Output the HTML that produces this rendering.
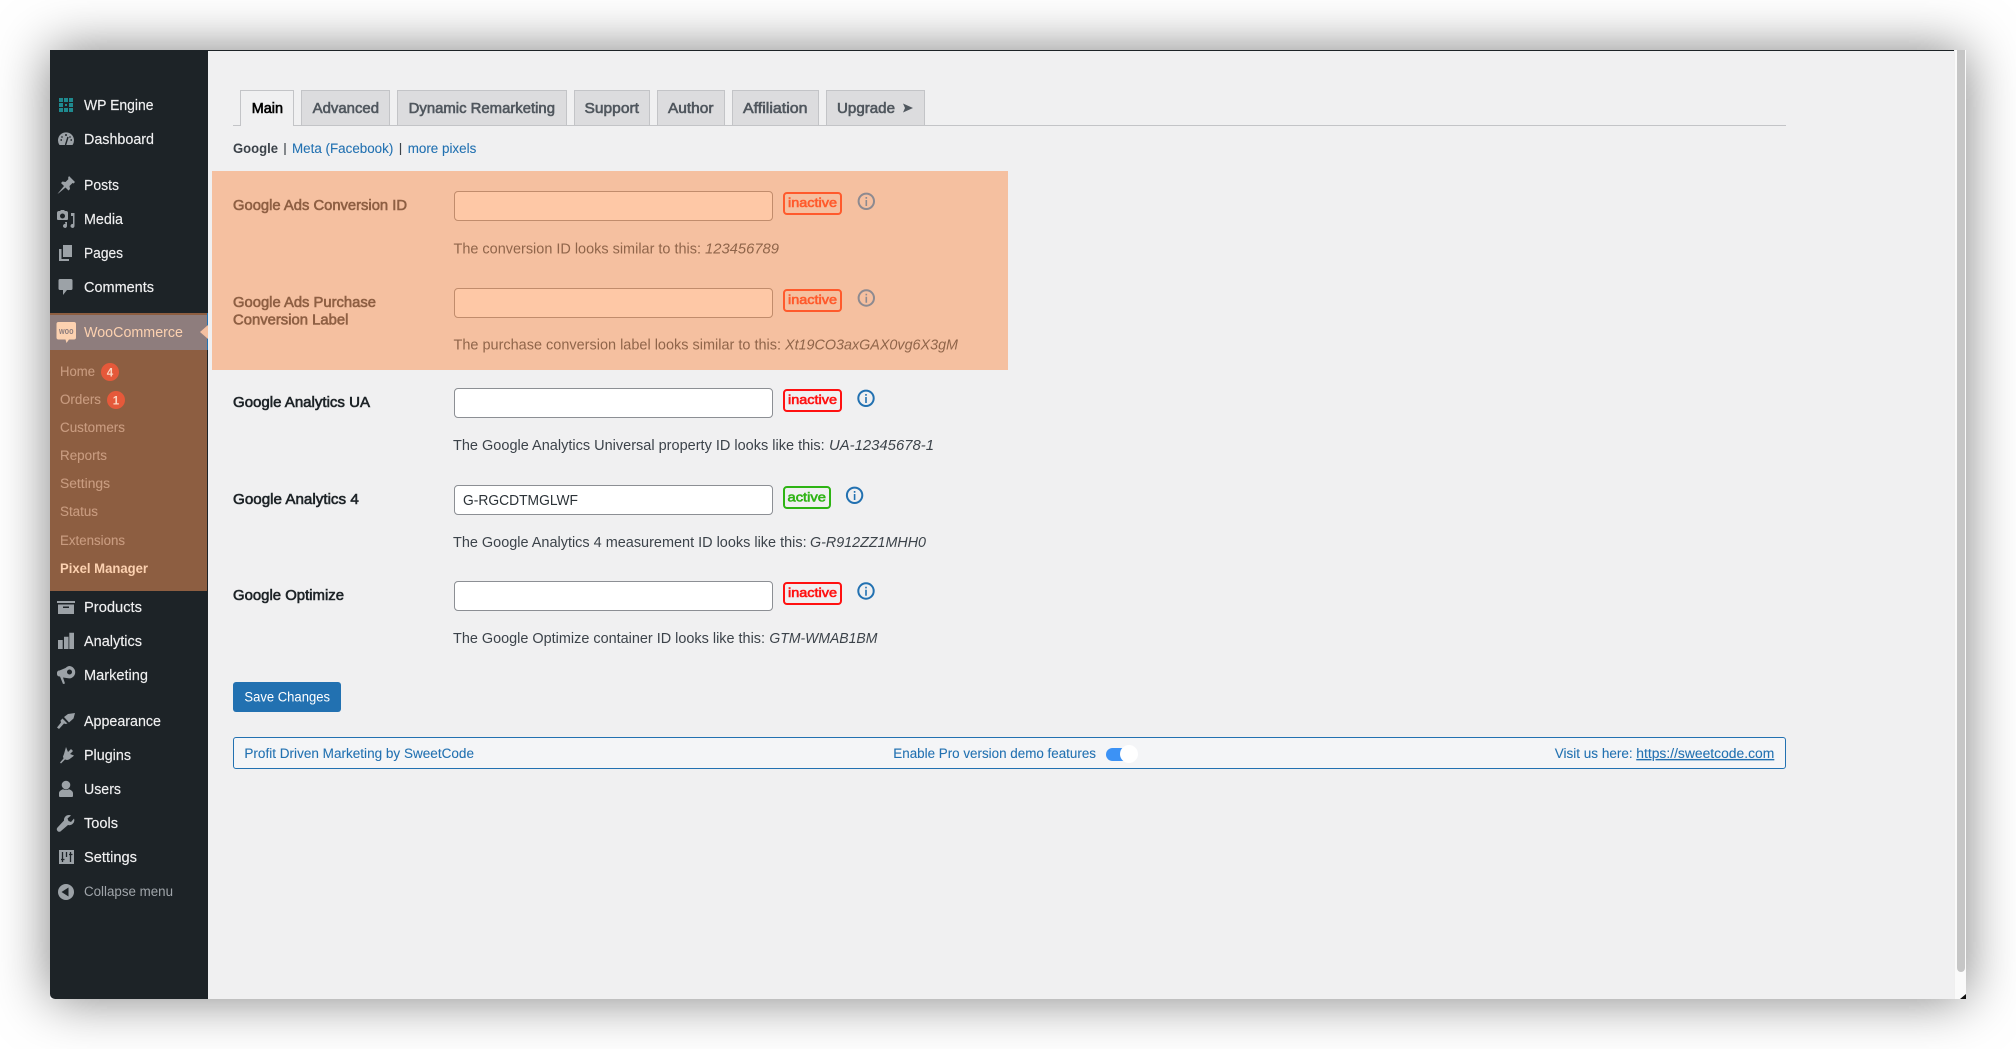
<!DOCTYPE html>
<html lang="en"><head><meta charset="utf-8"><title>Pixel Manager</title>
<style>
html,body{margin:0;padding:0;width:2016px;height:1049px;overflow:hidden;background:#fff}
body{position:relative;font-family:"Liberation Sans",sans-serif}
div,input{position:absolute;box-sizing:border-box}
#win{left:50px;top:50px;width:1916px;height:949px;background:#f0f0f1;box-shadow:0 0 50px rgba(0,0,0,.5)}
#topline{left:208px;top:50px;width:1746px;height:1px;background:#1d2327}
#side{left:50px;top:50px;width:158px;height:949px;background:#1d2327;border-bottom-left-radius:5px}
#wc0{left:50px;top:313px;width:157px;height:2px;background:#8d5e41}
#wc1{left:50px;top:315px;width:157px;height:35px;background:#8e7d7d}
#wc2{left:50px;top:350px;width:157px;height:241px;background:#8d5e41}
#wcb{left:207px;top:313px;width:1px;height:37px;background:#2271b1}
#track{left:1954px;top:50px;width:12px;height:949px;background:#fafafa;border-left:1px solid #efefef}
#thumb{left:1957px;top:50px;width:8px;height:922px;background:#c6c6c6;border-radius:0 0 4px 4px}
.tab{top:90px;height:35px;background:#dcdcde;border:1px solid #c3c4c7;border-bottom:0}
#line{left:233px;top:125px;width:1553px;height:1px;background:#c3c4c7}
#box{left:212px;top:171px;width:796px;height:199px;background:#f5c0a0}
input{left:454px;width:319px;height:30px;border:1px solid #8c8f94;border-radius:4px;background:#fff;padding:0;outline:0}
input.o{background:#fec8a6;border-color:#c18c6c}
.b{height:23px;border:2px solid #f11;border-radius:4px;left:783px;width:59px}
.b.o{border-color:#ff5a2c}
.b.g{border-color:#2eb414;width:48px}
#save{left:233px;top:682px;width:108px;height:30px;background:#2271b1;border-radius:3px}
#foot{left:233px;top:737px;width:1553px;height:32px;background:#f4f5f7;border:1px solid #2271b1;border-radius:3px}
#pill{left:1106px;top:748px;width:30px;height:13px;background:#3c92f5;border-radius:7px}
#knob{left:1120px;top:745px;width:18px;height:18px;background:#fff;border-radius:50%}
svg{position:absolute;left:0;top:0;filter:blur(.3px)}
text{font-family:"Liberation Sans",sans-serif;font-size:14.500px}
.m{fill:#f0f0f1;stroke:#f0f0f1;stroke-width:.15px}
.s{fill:#c99c80;font-size:13.500px;stroke:#c99c80;stroke-width:.1px}
.tb{fill:#50575e;stroke:#50575e;stroke-width:.6px}
.l{fill:#1d2327;stroke:#1d2327;stroke-width:.6px}
.lo{fill:#8e5f43;stroke:#8e5f43;stroke-width:.6px}
.d{fill:#3c434a}
.do{fill:#90654a}
.it{font-style:italic}
.ln{fill:#2271b1;font-size:13.500px;stroke:#2271b1;stroke-width:.08px}
.bt{font-size:13px;stroke-width:.6px}
.ic{fill:#9ca2a7}
</style></head><body>
<div id="win"></div>
<div id="topline"></div>
<div id="track"></div><div id="thumb"></div>
<div id="side"></div>
<div id="wc0"></div><div id="wc1"></div><div id="wc2"></div><div id="wcb"></div>

<div class="tab" style="left:301px;width:89px"></div>
<div class="tab" style="left:397px;width:170px"></div>
<div class="tab" style="left:574px;width:76px"></div>
<div class="tab" style="left:657px;width:68px"></div>
<div class="tab" style="left:732px;width:87px"></div>
<div class="tab" style="left:826px;width:99px"></div>
<div id="line"></div>
<div class="tab" style="left:240px;width:54px;background:#f0f0f1;height:36px"></div>

<div id="box"></div>
<input class="o" style="top:191px"><input class="o" style="top:288px">
<input style="top:388px"><input style="top:485px"><input style="top:581px">
<div class="b o" style="top:192px"></div>
<div class="b o" style="top:289px"></div>
<div class="b" style="top:389px"></div>
<div class="b g" style="top:486px"></div>
<div class="b" style="top:582px"></div>
<div id="save"></div>
<div id="foot"></div>
<div id="pill"></div><div id="knob"></div>

<svg width="2016" height="1049" viewBox="0 0 2016 1049">
<!-- sidebar text -->
<text class="m" x="84" y="110" textLength="69.500" lengthAdjust="spacingAndGlyphs">WP Engine</text>
<text class="m" x="84" y="144" textLength="70" lengthAdjust="spacingAndGlyphs">Dashboard</text>
<text class="m" x="84" y="190" textLength="35" lengthAdjust="spacingAndGlyphs">Posts</text>
<text class="m" x="84" y="224" textLength="39" lengthAdjust="spacingAndGlyphs">Media</text>
<text class="m" x="84" y="258" textLength="39" lengthAdjust="spacingAndGlyphs">Pages</text>
<text class="m" x="84" y="292" textLength="70" lengthAdjust="spacingAndGlyphs">Comments</text>
<text x="84" y="337" textLength="99" lengthAdjust="spacingAndGlyphs" fill="#fcd1b0">WooCommerce</text>
<path d="M200 332l8-7v14z" fill="#f5c0a0"/>
<text class="s" x="60" y="376" textLength="35" lengthAdjust="spacingAndGlyphs">Home</text>
<circle cx="110" cy="372" r="9" fill="#e5593a"/><text x="110" y="376.500" text-anchor="middle" style="font-size:11.500px;font-weight:700" fill="#fbd5c0">4</text>
<text class="s" x="60" y="404" textLength="41" lengthAdjust="spacingAndGlyphs">Orders</text>
<circle cx="116" cy="400" r="9" fill="#e5593a"/><text x="116" y="404.500" text-anchor="middle" style="font-size:11.500px;font-weight:700" fill="#fbd5c0">1</text>
<text class="s" x="60" y="432" textLength="65" lengthAdjust="spacingAndGlyphs">Customers</text>
<text class="s" x="60" y="460" textLength="47" lengthAdjust="spacingAndGlyphs">Reports</text>
<text class="s" x="60" y="488" textLength="50" lengthAdjust="spacingAndGlyphs">Settings</text>
<text class="s" x="60" y="516" textLength="38" lengthAdjust="spacingAndGlyphs">Status</text>
<text class="s" x="60" y="545" textLength="65" lengthAdjust="spacingAndGlyphs">Extensions</text>
<text x="60" y="573" textLength="88" lengthAdjust="spacingAndGlyphs" fill="#fcd1b0" style="font-size:13.500px;font-weight:700">Pixel Manager</text>
<text class="m" x="84" y="612" textLength="58" lengthAdjust="spacingAndGlyphs">Products</text>
<text class="m" x="84" y="646" textLength="58" lengthAdjust="spacingAndGlyphs">Analytics</text>
<text class="m" x="84" y="680" textLength="64" lengthAdjust="spacingAndGlyphs">Marketing</text>
<text class="m" x="84" y="726" textLength="77" lengthAdjust="spacingAndGlyphs">Appearance</text>
<text class="m" x="84" y="760" textLength="47" lengthAdjust="spacingAndGlyphs">Plugins</text>
<text class="m" x="84" y="794" textLength="37" lengthAdjust="spacingAndGlyphs">Users</text>
<text class="m" x="84" y="828" textLength="34" lengthAdjust="spacingAndGlyphs">Tools</text>
<text class="m" x="84" y="862" textLength="53" lengthAdjust="spacingAndGlyphs">Settings</text>
<text x="84" y="896" textLength="89" lengthAdjust="spacingAndGlyphs" fill="#a0a5aa" style="font-size:13.500px">Collapse menu</text>

<!-- sidebar icons -->
<g fill="#1f8a8f"><path d="M59 98h4v4h-4zM64 98h4v4h-4zM69 98h4v4h-4zM59 103h4v4h-4zM69 103h4v4h-4zM59 108h4v4h-4zM64 108h4v4h-4zM69 108h4v4h-4z"/><path d="M65 104h2v2h-2z"/></g>
<path class="ic" d="M59.500 145A8 8 0 1 1 72.500 145z"/>
<path d="M65.500 145l2.500-8M60.500 140h1.500M65 135h2M70.500 140h1.500M61.500 136.500l1 1M69.500 137.500l1-1" stroke="#1d2327" stroke-width="1.400" fill="none"/>
<path class="ic" d="M69 176l6 6-1.500 1.500-1-.5-3 3 .5 3-1.500 1.500-3-3-6 5-2 1.500 1.500-2 5-6-3-3 1.500-1.500 3 .5 3-3-.5-1z"/>
<path class="ic" fill-rule="evenodd" d="M57 213a2 2 0 0 1 2-2h1l1-1h3l1 1h1a2 2 0 0 1 2 2v6a1 1 0 0 1-1 1h-9a1 1 0 0 1-1-1zM62.500 213.500a2.500 2.500 0 1 0 .01 0zM71 213h3.500v13a2 2 0 1 1-1.500-2v-8h-2zM65 222h2v4a2 2 0 1 1-1.500-2z"/>
<path class="ic" d="M63 245h9v12h-9zM59 249h2.500v10h7.500v2h-10z"/>
<path class="ic" d="M60 279h11a1.500 1.500 0 0 1 1.500 1.500v8a1.500 1.500 0 0 1-1.500 1.500h-4l-4 5v-5h-3a1.500 1.500 0 0 1-1.500-1.500v-8a1.500 1.500 0 0 1 1.500-1.500z"/>
<path d="M58.500 322h15.500a2 2 0 0 1 2 2v13.500a2 2 0 0 1-2 2h-5l-2.500 3.500-1-3.500h-7a2 2 0 0 1-2-2v-13.500a2 2 0 0 1 2-2z" fill="#fcd1b0"/>
<text x="59" y="334" textLength="14.500" lengthAdjust="spacingAndGlyphs" style="font-size:9.500px;font-weight:700" fill="#8e7d7d">woo</text>
<path class="ic" d="M57 601h18v2h-18zM58 604.500h16v9.500h-16z"/><path d="M63 606.500h6v1.500h-6z" fill="#1d2327"/>
<path class="ic" d="M58 640h4.700v9h-4.700zM64 636.700h4.500v12.300h-4.500zM69.300 632.700h4.700v16.300h-4.700z"/>
<path class="ic" fill-rule="evenodd" d="M69 666a6.200 6.200 0 1 1 0 12.400l-6-.900 2 6-2 .500-3-7.500c-1.500 0-3-.500-3-2.500v-1c0-1.500 1-2.500 2.500-2.500l6-2.500a6 6 0 0 1 3.500-2zM69.500 669.500a2.500 2.500 0 1 0 .01 0z"/>
<path class="ic" d="M68 714l7-1-1.500 5.500-4.500 4-5-5.500zM62.500 718.500l5 5-2 .5-1.500-.5-5 5.500-2-1.500 4-5-.5-2z"/>
<path class="ic" d="M66 747l2 5 3-3 2 2-3 3 4 1.500-1 1-4 3-2 .5-2-.5-4 4-1-1 3.500-4-.5-2 1-2.500z"/>
<circle class="ic" cx="66" cy="785" r="4.300"/><path class="ic" d="M59 793c0-2 3-3.500 4-3.800 1.500.8 4.500.8 6 0 1 .3 4 1.800 4 3.800v3c0 .6-.4 1-1 1h-12c-.6 0-1-.4-1-1z"/>
<path class="ic" fill-rule="evenodd" d="M69 815a5 5 0 0 1 2 .5l-3.500 3 1 2.500 2.500 1 3-3.500a5 5 0 0 1-6 6.500l-7 6c-1 1-2.500 1-3.500 0s-1-2.500 0-3.500l6.500-7a5 5 0 0 1 5-5.500z"/>
<path class="ic" d="M59 850h15v14h-15z"/><path d="M62.500 852v10M70.500 852v10M61 859.500h3.500M69 854.500h3.500M66.500 852v5" stroke="#1d2327" stroke-width="1.300" fill="none"/>
<circle class="ic" cx="66" cy="892" r="8"/><path d="M61.500 892l7-4.500v9z" fill="#1d2327"/>

<!-- tabs -->
<text x="251.700" y="113" textLength="31.300" lengthAdjust="spacingAndGlyphs" fill="#000" stroke="#000" stroke-width=".6">Main</text>
<text class="tb" x="312.700" y="113" textLength="66.300" lengthAdjust="spacingAndGlyphs">Advanced</text>
<text class="tb" x="408.700" y="113" textLength="146.300" lengthAdjust="spacingAndGlyphs">Dynamic Remarketing</text>
<text class="tb" x="584.500" y="113" textLength="54.500" lengthAdjust="spacingAndGlyphs">Support</text>
<text class="tb" x="668" y="113" textLength="45.500" lengthAdjust="spacingAndGlyphs">Author</text>
<text class="tb" x="743" y="113" textLength="64.500" lengthAdjust="spacingAndGlyphs">Affiliation</text>
<text class="tb" x="837" y="113" textLength="58" lengthAdjust="spacingAndGlyphs">Upgrade</text>
<path d="M903 103.500l10 4.500-10 4.500 2-4.500z" fill="#50575e"/>

<!-- subnav -->
<text x="233" y="153" textLength="45" lengthAdjust="spacingAndGlyphs" fill="#3c434a" style="font-size:13.500px;font-weight:700">Google</text>
<path d="M285 143v12M400.500 143v12" stroke="#3c434a" stroke-width="1.200"/>
<text class="ln" x="292" y="153" textLength="101.300" lengthAdjust="spacingAndGlyphs">Meta (Facebook)</text>
<text class="ln" x="407.700" y="153" textLength="68.600" lengthAdjust="spacingAndGlyphs">more pixels</text>

<!-- rows -->
<text class="lo" x="233" y="210" textLength="174" lengthAdjust="spacingAndGlyphs">Google Ads Conversion ID</text>
<text class="bt" x="788" y="207" textLength="49" lengthAdjust="spacingAndGlyphs" fill="#ff5a2c" stroke="#ff5a2c">inactive</text>
<text class="do" x="453.500" y="253.500" textLength="247.500" lengthAdjust="spacingAndGlyphs">The conversion ID looks similar to this:</text>
<text class="do it" x="705" y="253.500" textLength="74" lengthAdjust="spacingAndGlyphs">123456789</text>

<text class="lo" x="233" y="307" textLength="143" lengthAdjust="spacingAndGlyphs">Google Ads Purchase</text>
<text class="lo" x="233" y="324.500" textLength="115.400" lengthAdjust="spacingAndGlyphs">Conversion Label</text>
<text class="bt" x="788" y="304" textLength="49" lengthAdjust="spacingAndGlyphs" fill="#ff5a2c" stroke="#ff5a2c">inactive</text>
<text class="do" x="453.500" y="349.500" textLength="327.500" lengthAdjust="spacingAndGlyphs">The purchase conversion label looks similar to this:</text>
<text class="do it" x="785" y="349.500" textLength="173" lengthAdjust="spacingAndGlyphs">Xt19CO3axGAX0vg6X3gM</text>

<text class="l" x="233" y="407" textLength="137" lengthAdjust="spacingAndGlyphs">Google Analytics UA</text>
<text class="bt" x="788" y="404" textLength="49" lengthAdjust="spacingAndGlyphs" fill="#f11" stroke="#f11">inactive</text>
<text class="d" x="453" y="450" textLength="371.700" lengthAdjust="spacingAndGlyphs">The Google Analytics Universal property ID looks like this:</text>
<text class="d it" x="829" y="450" textLength="105" lengthAdjust="spacingAndGlyphs">UA-12345678-1</text>

<text class="l" x="233" y="504" textLength="125.800" lengthAdjust="spacingAndGlyphs">Google Analytics 4</text>
<text x="463" y="505" textLength="115" lengthAdjust="spacingAndGlyphs" fill="#2c3338">G-RGCDTMGLWF</text>
<text class="bt" x="787.500" y="501.300" textLength="38.500" lengthAdjust="spacingAndGlyphs" fill="#2eb414" stroke="#2eb414">active</text>
<text class="d" x="453" y="547" textLength="353.600" lengthAdjust="spacingAndGlyphs">The Google Analytics 4 measurement ID looks like this:</text>
<text class="d it" x="810" y="547" textLength="116" lengthAdjust="spacingAndGlyphs">G-R912ZZ1MHH0</text>

<text class="l" x="233" y="600" textLength="111" lengthAdjust="spacingAndGlyphs">Google Optimize</text>
<text class="bt" x="788" y="597" textLength="49" lengthAdjust="spacingAndGlyphs" fill="#f11" stroke="#f11">inactive</text>
<text class="d" x="453" y="643" textLength="312" lengthAdjust="spacingAndGlyphs">The Google Optimize container ID looks like this:</text>
<text class="d it" x="769.400" y="643" textLength="108" lengthAdjust="spacingAndGlyphs">GTM-WMAB1BM</text>

<!-- info icons -->
<g fill="none" stroke-width="2">
<circle cx="866.300" cy="201.300" r="7.700" stroke="#8d8a90"/><circle cx="866.300" cy="298" r="7.700" stroke="#8d8a90"/>
<circle cx="866" cy="398.300" r="7.700" stroke="#2271b1"/><circle cx="854.600" cy="495.300" r="7.700" stroke="#2271b1"/><circle cx="866" cy="591" r="7.700" stroke="#2271b1"/>
</g>
<path d="M865.500 197h1.600v1.700h-1.600zM865.500 200h1.600v6h-1.600zM865.500 293.700h1.600v1.700h-1.600zM865.500 296.700h1.600v6h-1.600z" fill="#8d8a90"/>
<path d="M865.200 394h1.600v1.700h-1.600zM865.200 397h1.600v6h-1.600zM853.800 491h1.600v1.700h-1.600zM853.800 494h1.600v6h-1.600zM865.200 586.700h1.600v1.700h-1.600zM865.200 589.700h1.600v6h-1.600z" fill="#2271b1"/>

<!-- button + footer -->
<text x="244.400" y="701.700" textLength="85.600" lengthAdjust="spacingAndGlyphs" fill="#fff" style="font-size:13.500px">Save Changes</text>
<text class="ln" x="244.400" y="758" textLength="229.600" lengthAdjust="spacingAndGlyphs">Profit Driven Marketing by SweetCode</text>
<text class="ln" x="893.300" y="758" textLength="202.700" lengthAdjust="spacingAndGlyphs">Enable Pro version demo features</text>
<text class="ln" x="1554.700" y="758" textLength="78" lengthAdjust="spacingAndGlyphs">Visit us here:</text>
<text class="ln" x="1636.300" y="758" textLength="138" lengthAdjust="spacingAndGlyphs" style="text-decoration:underline">https://sweetcode.com</text>
<path d="M1960 999l6-5v5z" fill="#111"/>
</svg>
</body></html>
